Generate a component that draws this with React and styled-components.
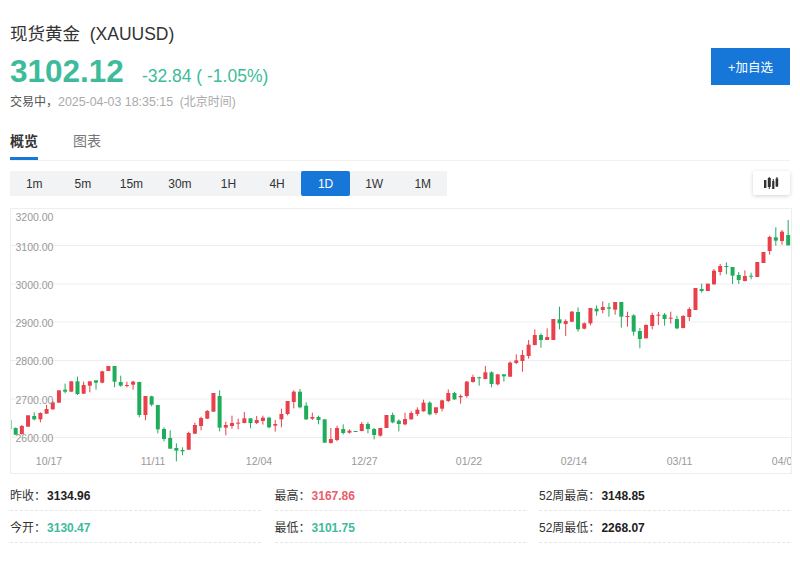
import React from 'react';
import styled, { createGlobalStyle } from 'styled-components';

const FONT = '"Liberation Sans", "Noto Sans CJK SC", sans-serif';
const RED = '#e8414b';
const GREEN = '#1fad5c';
const TEAL = '#3dbb9b';
const BLUE = '#1677d9';

const Global = createGlobalStyle`
  html, body { margin: 0; padding: 0; background: #fff; }
  body { font-family: ${FONT}; overflow: hidden; }
`;

const Page = styled.div`
  width: 800px;
  height: 567px;
  box-sizing: border-box;
  padding: 22px 10px 0;
`;
const Header = styled.header`
  display: flex;
  justify-content: space-between;
  align-items: flex-start;
  height: 92px;
`;
const Title = styled.h1`
  margin: 0;
  font-size: 17.5px;
  line-height: 24px;
  font-weight: 400;
  color: #333;
  white-space: pre;
`;
const PriceRow = styled.div`
  display: flex;
  align-items: baseline;
  gap: 18px;
  height: 42px;
  margin-top: 4px;
`;
const Price = styled.span`
  font-size: 31.5px;
  line-height: 42px;
  font-weight: 700;
  color: ${TEAL};
`;
const Change = styled.span`
  font-size: 17.5px;
  color: ${TEAL};
  white-space: pre;
`;
const Status = styled.div`
  font-size: 12px;
  line-height: 16px;
  margin-top: 2px;
  color: #aaa;
  white-space: pre;
`;
const StatusLabel = styled.span`
  color: #555;
`;
const Stamp = styled.span`
  font-size: 12.4px;
`;
const AddButton = styled.button`
  width: 79px;
  height: 37px;
  margin-top: 26px;
  border: 0;
  padding: 0;
  background: ${BLUE};
  color: #fff;
  font: 12.5px ${FONT};
`;
const Tabs = styled.nav`
  display: flex;
  gap: 35px;
  height: 47px;
  box-sizing: border-box;
  border-bottom: 1px solid #f0f0f0;
`;
const Tab = styled.a`
  height: 46px;
  box-sizing: border-box;
  padding-top: 17px;
  font-size: 14px;
  line-height: 20px;
  font-weight: ${p => (p.$active ? 700 : 400)};
  color: ${p => (p.$active ? '#333' : '#777')};
  border-bottom: 3px solid ${p => (p.$active ? BLUE : 'transparent')};
`;
const Toolbar = styled.div`
  display: flex;
  justify-content: space-between;
  align-items: flex-start;
  margin-top: 10px;
`;
const Ranges = styled.div`
  display: grid;
  grid-template-columns: repeat(9, 1fr);
  width: 437px;
  height: 25px;
  background: #f2f3f5;
`;
const Range = styled.div`
  display: flex;
  align-items: center;
  justify-content: center;
  font-size: 12px;
  border-radius: 2px;
  color: ${p => (p.$active ? '#fff' : '#333')};
  background: ${p => (p.$active ? BLUE : 'transparent')};
`;
const IconButton = styled.div`
  width: 37px;
  height: 24px;
  display: flex;
  align-items: center;
  justify-content: center;
  background: #fff;
  border-radius: 2px;
  box-shadow: 0 1px 4px rgba(0, 0, 0, 0.18);
`;
const ChartBox = styled.div`
  width: 782px;
  height: 266px;
  box-sizing: border-box;
  margin-top: 12px;
  border: 1px solid #eee;
  overflow: hidden;
`;
const ChartSvg = styled.svg`
  display: block;
  width: 780px;
  height: 264px;
`;
const AxisText = styled.text`
  font-family: ${FONT};
  font-size: 10.5px;
  fill: #999;
`;
const Stats = styled.div`
  display: grid;
  grid-template-columns: 251px 251px 251px;
  column-gap: 13.5px;
  margin-top: 5px;
`;
const Stat = styled.div`
  height: 32px;
  box-sizing: border-box;
  padding-top: 9px;
  font-size: 12px;
  line-height: 16px;
  color: #333;
  border-bottom: 1px dashed #e6e6e6;
`;
const StatValue = styled.b`
  margin-left: 1px;
  color: ${p => p.$color || '#222'};
`;

/* Candles: [colour, bodyTop, bodyBottom, wickTop, wickBottom], read at 3x scale */
const A = `g 240 268 240 268|g 264 284 262 285|r 258 282 255 284|r 226 260 226 260|g 228 238 217 241|r 219 238 217 247|r 207 221 195 222|r 187 208 182 209|r 151 188 151 188|g 149 155 131 160|r 124 155 124 155|g 124 162 110 165|r 135 161 125 162|r 124 137 124 157|g 121 128 121 149|r 94 128 92 130|r 78 93 78 93|g 78 125 78 142|g 126 137 107 140|r 135 138 125 142|r 125 134 122 149|g 126 225 125 232|r 168 225 168 241|g 169 194 167 199|g 195 268 195 280|g 267 297 262 304|g 294 326 271 327|g 324 332 310 364|g 330 334 322 346|r 279 329 275 330|r 255 281 248 282|r 234 258 230 271|r 213 236 210 237|r 159 215 159 215|g 168 263 151 274|r 255 263 245 286|r 249 258 227 266|r 248 251 236 268|r 235 249 216 250|g 235 249 235 265|r 240 249 228 252|r 233 243 227 254|g 233 262 230 265|r 252 257 240 275|r 222 238 206 262|r 183 222 183 226|r 155 186 151 205|g 155 202 147 205|g 197 238 187 240|r 231 236 218 240|g 231 240 227 253|g 238 308 238 308|r 297 309 264 311|r 264 300 257 304|g 267 279 253 283|r 272 278 268 281|g 273 275 273 275|r 252 273 246 274|g 252 267 246 280|g 267 285 264 298|r 264 287 264 290|r 225 264 225 264|g 225 247 218 250|g 242 252 238 274|r 237 253 218 256|r 219 238 214 239|r 209 222 202 228|r 188 214 179 215|g 188 223 184 226|r 202 219 202 224|r 181 206 179 214|r 159 183 148 186|g 159 178 156 180|r 168 172 163 191|r 125 168 123 173|r 111 126 104 128|g 112 114 110 137|r 97 117 78 118|g 97 132 94 142|r 103 133 103 136|g 103 109 103 125|r 68 110 64 111|r 61 69 43 72|r 45 63 30 95|r 14 48 0 56`;
const B = `r 375 405 358 406|g 375 390 370 413|r 381 390 355 390|r 327 390 327 390|g 328 340 290 358|r 333 342 328 378|r 305 335 303 337|g 306 358 292 365|r 340 356 337 358|r 294 340 294 346|g 296 304 286 317|r 291 300 274 310|g 292 296 279 320|r 276 299 276 314|g 276 320 276 353|r 318 320 305 350|g 316 365 313 377|g 363 387 354 415|r 345 385 343 385|r 315 348 308 358|r 314 316 306 345|g 314 327 309 347|r 323 326 305 341|g 327 355 317 358|r 318 354 315 355|r 297 321 292 333|r 234 300 234 300|g 237 243 221 248|r 221 243 221 243|r 182 223 177 224|r 168 186 162 196|g 168 171 157 193|g 171 197 171 222|g 195 210 186 222|r 198 213 181 214|g 197 200 188 208|r 156 201 156 201|r 126 159 126 159|r 81 123 77 134|g 82 92 52 107|r 65 93 60 104|g 75 106 30 106`;

const parse = (text, base) =>
  text.split('|').map(s => {
    const [c, ...n] = s.split(' ');
    const [t, b, wt, wb] = n.map(v => base + Number(v) / 3);
    return { c, t, b, wt, wb };
  });
const candles = [...parse(A, 340), ...parse(B, 210)];

const gridY = [245.5, 284, 322, 360.5, 399, 437.5];
const yLabels = [
  ['3200.00', 220.5],
  ['3100.00', 250.5],
  ['3000.00', 288.5],
  ['2900.00', 326.5],
  ['2800.00', 365],
  ['2700.00', 403.5],
  ['2600.00', 442],
];
const xLabels = [
  ['10/17', 49],
  ['11/11', 153],
  ['12/04', 259],
  ['12/27', 364.5],
  ['01/22', 469],
  ['02/14', 574],
  ['03/11', 679.5],
  ['04/03', 785],
];

const Chart = () => (
  <ChartBox>
    <ChartSvg viewBox="11 209 780 264">
      {gridY.map(y => (
        <line key={y} x1="11" x2="791" y1={y} y2={y} stroke="#eee" strokeWidth="1" />
      ))}
      {candles.map((k, i) => {
        const x = 9.5 + 6.18 * i;
        const color = k.c === 'r' ? RED : GREEN;
        return (
          <g key={i}>
            <line x1={x} x2={x} y1={k.wt} y2={k.wb} stroke={color} strokeWidth="1" />
            <rect x={x - 2} y={k.t} width="4" height={Math.max(k.b - k.t, 1)} fill={color} />
          </g>
        );
      })}
      {yLabels.map(([t, y]) => (
        <AxisText key={t} x="15.5" y={y}>{t}</AxisText>
      ))}
      {xLabels.map(([t, x]) => (
        <AxisText key={t} x={x} y="465" textAnchor="middle">{t}</AxisText>
      ))}
    </ChartSvg>
  </ChartBox>
);

const CandleIcon = () => (
  <svg width="15" height="13" viewBox="0 0 15 13">
    <g fill="#333">
      <rect x="0" y="3" width="2.4" height="8" />
      <rect x="3.8" y="1" width="3" height="9" />
      <rect x="4.8" y="0" width="1" height="12" />
      <rect x="8.2" y="4" width="2.2" height="8" />
      <rect x="8.8" y="2" width="1" height="10" />
      <rect x="11.6" y="1.5" width="2.6" height="8" />
      <rect x="12.4" y="0" width="1" height="10" />
    </g>
  </svg>
);

const ranges = ['1m', '5m', '15m', '30m', '1H', '4H', '1D', '1W', '1M'];
const stats = [
  ['昨收', '3134.96'],
  ['最高', '3167.86', '#e8606a'],
  ['52周最高', '3148.85'],
  ['今开', '3130.47', TEAL],
  ['最低', '3101.75', TEAL],
  ['52周最低', '2268.07'],
];

export default function App() {
  return (
    <Page>
      <Global />
      <Header>
        <div>
          <Title>现货黄金  (XAUUSD)</Title>
          <PriceRow>
            <Price>3102.12</Price>
            <Change>-32.84 ( -1.05%)</Change>
          </PriceRow>
          <Status>
            <StatusLabel>交易中，</StatusLabel>
            <Stamp>2025-04-03 18:35:15</Stamp>  (北京时间)
          </Status>
        </div>
        <AddButton>+加自选</AddButton>
      </Header>
      <Tabs>
        <Tab $active>概览</Tab>
        <Tab>图表</Tab>
      </Tabs>
      <Toolbar>
        <Ranges>
          {ranges.map(r => (
            <Range key={r} $active={r === '1D'}>{r}</Range>
          ))}
        </Ranges>
        <IconButton><CandleIcon /></IconButton>
      </Toolbar>
      <Chart />
      <Stats>
        {stats.map(([k, v, c]) => (
          <Stat key={k}>{k}：<StatValue $color={c}>{v}</StatValue></Stat>
        ))}
      </Stats>
    </Page>
  );
}
